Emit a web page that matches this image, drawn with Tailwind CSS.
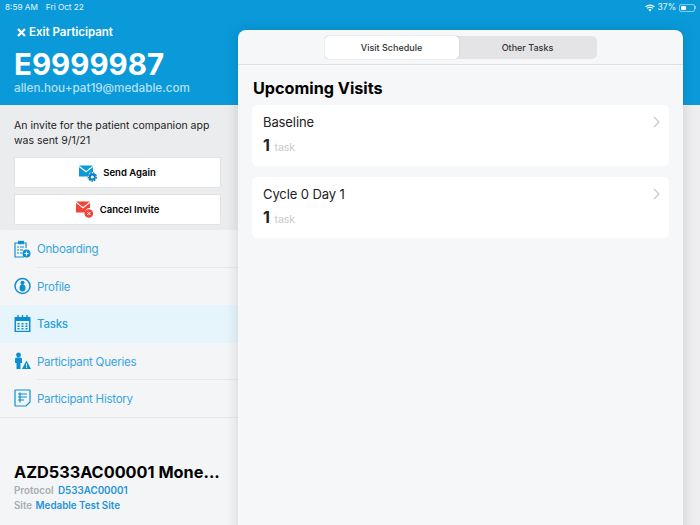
<!DOCTYPE html>
<html lang="en">
<head>
    <meta charset="UTF-8" />
    <meta name="viewport" content="width=device-width, initial-scale=1.0"/>
    <title>Participant - Tasks</title>
    <script src="https://cdn.jsdelivr.net/npm/@tailwindcss/browser@4"></script>
</head>
<body class="relative w-[700px] h-[525px] overflow-hidden bg-[#f4f5f7] font-['Inter','Liberation_Sans',sans-serif] text-black">

<!-- Status bar over header -->
<div class="absolute inset-x-0 top-0 z-20 h-[15px] flex items-center justify-between pl-[5px] pr-[4px] text-[8.2px] text-white/90">
    <div class="flex gap-[8px]"><span>8:59 AM</span><span>Fri Oct 22</span></div>
    <div class="flex items-center gap-[3px]">
        <svg width="10" height="8" viewBox="0 0 10 8" fill="none" stroke="white" stroke-width="1.2"><path d="M.7 2.8a6.2 6.2 0 0 1 8.6 0M2.2 4.4a4 4 0 0 1 5.6 0"/><path d="M3.500 5.800 5 7.400l1.500-1.600a2 2 0 0 0-3 0z" fill="white" stroke="none"/></svg>
        <span class="text-[8.5px]">37%</span>
        <div class="flex items-center">
            <div class="w-[16px] h-[8px] rounded-[2px] border border-white/50 p-[1px]"><div class="w-[5px] h-full bg-white rounded-[1px]"></div></div>
            <div class="w-[1px] h-[3px] bg-white/50"></div>
        </div>
    </div>
</div>

<!-- Left column -->
<div class="w-[238px] h-full flex flex-col">
    <header class="h-[105px] bg-[#0a9ada] pl-[14px] pt-[24px] text-white">
        <div class="flex items-center pl-[3px] gap-[3px] text-[11.5px] font-semibold leading-[16px]">
            <svg width="9" height="9" viewBox="0 0 9 9" stroke="white" stroke-width="2.200"><path d="M1 1l7 7M8 1 1 8"/></svg>
            <span>Exit Participant</span>
        </div>
        <h1 class="mt-[8px] text-[29.5px] font-bold leading-[33px]">E9999987</h1>
        <p class="text-[11.700px] font-medium leading-[14px] text-[#b5e0f5]">allen.hou+pat19@medable.com</p>
    </header>

    <section class="h-[125px] bg-[#ebecee] pl-[14px] pr-[17px] pt-[13px]">
        <p class="text-[10.5px] leading-[15px] text-[#222]">An invite for the patient companion app was sent 9/1/21</p>
        <div class="mt-[9px] pt-[1px] h-[31px] bg-white rounded-[2px] border border-[#e3e3e5] flex items-center justify-center gap-[6px] text-[9.500px] font-semibold">
            <svg width="18" height="17" viewBox="0 0 18 17"><path d="M0 .5h14L7 6 0 .5z" fill="#0a9ada"/><path d="M0 2 7 7.500 14 2v5a5 5 0 0 0-5 4.500H0z" fill="#0a9ada"/><circle cx="13.300" cy="12" r="4" fill="none" stroke="#0a7fc0" stroke-width="1.400" stroke-dasharray="1.800 .9"/><circle cx="13.300" cy="12" r="2.500" fill="none" stroke="#0a7fc0" stroke-width="1.800"/></svg>
            <span>Send Again</span>
        </div>
        <div class="mt-[6px] pt-[1px] h-[31px] bg-white rounded-[2px] border border-[#e3e3e5] flex items-center justify-center gap-[6px] text-[9.500px] font-semibold">
            <svg width="18" height="18" viewBox="0 0 18 18"><path d="M0 .5h14L7 6 0 .5z" fill="#f04438"/><path d="M0 2 7 7.500 14 2v5a5 5 0 0 0-5 4.500H0z" fill="#f04438"/><circle cx="12.800" cy="12.500" r="4.300" fill="#f04438"/><path d="M11.300 11l3 3M14.300 11l-3 3" stroke="white" stroke-width="1"/></svg>
            <span>Cancel Invite</span>
        </div>
    </section>

    <nav class="text-[11.500px] tracking-[-0.25px] text-[#36a5e0]">
        <div class="h-[37.500px] flex items-center pl-[14px] gap-[6px]">
            <svg class="w-[17px] h-[18px]" viewBox="0 0 17 18" fill="none" stroke="#0a8fd0" stroke-width="1.200"><path d="M4 3H1v14h9"/><path d="M10 3h2v5"/><rect x="4" y=".8" width="6" height="3.400" fill="#0a8fd0" stroke="none"/><path d="M3 7h2M6 7h4M3 10h2M6 10h3M3 13h2M6 13h2"/><circle cx="12.500" cy="13.500" r="4" fill="#0a8fd0" stroke="none"/><path d="M10.500 13.500h4M12.500 11.500v4" stroke="white"/></svg>
            <span class="flex-1 h-full flex items-center pt-[3px] border-b border-[#e8e9eb]">Onboarding</span>
        </div>
        <div class="h-[37.500px] flex items-center pl-[14px] gap-[6px]">
            <svg class="w-[17px] h-[18px]" viewBox="0 0 17 18"><circle cx="8.500" cy="9" r="7.500" fill="none" stroke="#0a8fd0" stroke-width="1.500"/><circle cx="8.500" cy="5.800" r="2.100" fill="#0a8fd0"/><ellipse cx="8.500" cy="11" rx="3" ry="3.400" fill="#0a8fd0"/></svg>
            <span class="pt-[2px]">Profile</span>
        </div>
        <div class="h-[37.500px] flex items-center pl-[14px] gap-[6px] bg-[#e6f5fc] font-medium text-[#2a9fdc]">
            <svg class="w-[17px] h-[18px]" viewBox="0 0 17 18"><path d="M1 2h15a.5.5 0 0 1 .5.5V17H.5V2.500A.5.5 0 0 1 1 2z" fill="#0a8fd0"/><rect x="2" y="6" width="13" height="9.800" fill="#e6f5fc"/><path d="M4 0v4M8.500 0v4M13 0v4" stroke="#0a8fd0" stroke-width="1.400"/><path d="M3.500 8h2v1.500h-2zM7.500 8h2v1.500h-2zM11.500 8h2v1.500h-2zM3.500 10.500h2V12h-2zM7.500 10.500h2V12h-2zM11.500 10.500h2V12h-2zM3.500 13h2v1.500h-2zM7.500 13h2v1.500h-2zM11.500 13h2v1.500h-2z" fill="#0a8fd0"/></svg>
            <span class="pt-[2px]">Tasks</span>
        </div>
        <div class="h-[37.500px] flex items-center pl-[14px] gap-[6px]">
            <svg class="w-[17px] h-[18px]" viewBox="0 0 17 18"><circle cx="4.500" cy="3" r="2.400" fill="#0a8fd0"/><path d="M1 7c0-1 1-1.500 3.500-1.500S8 6 8 7v4H6.500v6h-4v-6H1z" fill="#0a8fd0"/><path d="M12.500 8.500 17 17H8z" fill="#0a8fd0"/><path d="M12.500 11.500v3M12.500 15v1" stroke="white" stroke-width="1"/></svg>
            <span class="flex-1 h-full flex items-center pt-[3px] border-b border-[#e8e9eb]">Participant Queries</span>
        </div>
        <div class="h-[37.500px] flex items-center pl-[14px] gap-[6px] border-b border-[#e8e9eb]">
            <svg class="w-[17px] h-[18px]" viewBox="0 0 17 18" fill="none" stroke="#0a8fd0" stroke-width="1.200"><path d="M1.500 1h14a.5.5 0 0 1 .5.500V13l-4 4H1.500a.5.5 0 0 1-.5-.5v-15a.5.5 0 0 1 .5-.5z"/><path d="M4 5h9M4 8h9M4 11h6M6 3.500v10"/></svg>
            <span class="pt-[3px]">Participant History</span>
        </div>
    </nav>

    <footer class="mt-auto pl-[14px] pb-[12px] pr-[10px]">
        <h2 class="text-[16.300px] font-bold leading-[20px] whitespace-nowrap">AZD533AC00001 Mone...</h2>
        <p class="mt-[1px] text-[9.800px] font-semibold leading-[15px] text-[#a9acb0]">Protocol <span class="ml-[2px] text-[#1f94d5]">D533AC00001</span></p>
        <p class="text-[9.800px] font-semibold leading-[15px] text-[#a9acb0]">Site <span class="ml-[1px] text-[#1f94d5]">Medable Test Site</span></p>
    </footer>
</div>

<!-- Right backdrop -->
<div class="absolute left-[238px] right-0 top-0 h-[105px] bg-[#0a9ada]"></div>
<div class="absolute left-[238px] right-0 top-[105px] bottom-0 bg-[#eeeef0]"></div>

<!-- Sheet -->
<main class="absolute left-[238px] top-[30px] w-[445px] h-[510px] bg-[#f6f7f9] rounded-t-[8px] shadow-[0_0_14px_rgba(0,0,0,0.14)] flex flex-col">
    <div class="h-[35px] shrink-0 flex justify-center items-center border-b border-[#dfe0e2]">
        <div class="flex w-[272px] h-[23px] rounded-[5px] bg-[#e4e4e6] text-[9px] font-medium text-[#333]">
            <div class="w-[134px] pt-[1px] bg-white rounded-[4px] shadow-[0_0_1px_rgba(0,0,0,0.4)] flex items-center justify-center">Visit Schedule</div>
            <div class="flex-1 pt-[1px] flex items-center justify-center">Other Tasks</div>
        </div>
    </div>
    <section class="pl-[14px] pr-[14px] pt-[12px]">
        <h2 class="pl-[1px] text-[16.200px] font-bold leading-[22px]">Upcoming Visits</h2>
        <div class="mt-[6px] space-y-[11px]">
            <div class="h-[61px] bg-white rounded-[5px] pl-[11px] pr-[8px] pt-[9px] relative">
                <p class="text-[13px] tracking-[-0.1px] leading-[16px] text-[#222]">Baseline</p>
                <p class="mt-[6px] leading-[18px]"><span class="text-[16px] font-bold text-[#222]">1</span> <span class="text-[10.500px] text-[#c8c9cc]">task</span></p>
                <svg class="absolute right-[9px] top-[11px]" width="7" height="12" viewBox="0 0 7 12" fill="none" stroke="#c6c7c9" stroke-width="1.200"><path d="M1 1l5 5-5 5"/></svg>
            </div>
            <div class="h-[61px] bg-white rounded-[5px] pl-[11px] pr-[8px] pt-[9px] relative">
                <p class="text-[13px] tracking-[-0.1px] leading-[16px] text-[#222]">Cycle 0 Day 1</p>
                <p class="mt-[6px] leading-[18px]"><span class="text-[16px] font-bold text-[#222]">1</span> <span class="text-[10.500px] text-[#c8c9cc]">task</span></p>
                <svg class="absolute right-[9px] top-[11px]" width="7" height="12" viewBox="0 0 7 12" fill="none" stroke="#c6c7c9" stroke-width="1.200"><path d="M1 1l5 5-5 5"/></svg>
            </div>
        </div>
    </section>
</main>

</body>
</html>
